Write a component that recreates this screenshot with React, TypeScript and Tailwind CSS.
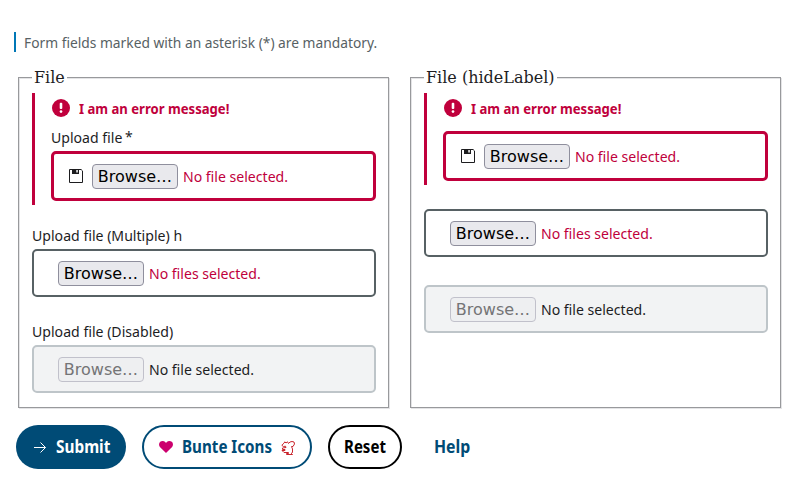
import type { ReactNode } from 'react';

type TextProps = { className?: string; children: ReactNode };

/** Narrow-set text: the glyphs are condensed horizontally from their left edge. */
function Text({ className = '', children }: TextProps) {
  return <span className={`block origin-left whitespace-nowrap ${className}`}>{children}</span>;
}

function ErrorMessage() {
  return (
    <div className="flex h-[30px] items-center text-[#c0003c]">
      <svg viewBox="0 0 18 18" className="ml-px size-[18px] shrink-0">
        <circle cx="9" cy="9" r="9" fill="currentColor" />
        <rect x="7.7" y="3.8" width="2.6" height="6.2" rx="0.9" fill="#fff" />
        <circle cx="9" cy="12.6" r="1.35" fill="#fff" />
      </svg>
      <Text className="ml-[9px] w-[150px] scale-x-[0.873] text-[15px] leading-6 font-bold">
        I am an error message!
      </Text>
    </div>
  );
}

function SaveIcon() {
  return (
    <svg viewBox="0 0 14 14" className="mt-[5px] size-[14px] shrink-0" fill="none" stroke="#1d1d1f">
      <path d="M.5.5h11.6l1.4 1.4v11.6H.5z" />
      <path d="M3 0.5h7v4.5H3z" fill="#1d1d1f" stroke="none" />
      <path d="M7.3 1h1.5v2.5H7.3z" fill="#fff" stroke="none" />
    </svg>
  );
}

type FileInputProps = { state: 'error' | 'default' | 'disabled'; multiple?: boolean };

const boxStyles = {
  error: 'h-[50px] border-3 border-[#c0003c] pl-[15px] text-[#c0003c]',
  default: 'h-12 border-2 border-[#576164] pl-6 text-[#c0003c]',
  disabled: 'h-12 border-2 border-[#bec5c9] bg-[#f2f3f4] pl-6 text-[#1d1d1f]',
};

function FileInput({ state, multiple = false }: FileInputProps) {
  const disabled = state === 'disabled';
  return (
    <div className={`flex items-start rounded-[5px] pt-[10px] ${boxStyles[state]}`}>
      {state === 'error' && <SaveIcon />}
      <button
        className={`h-[25px] w-[86px] shrink-0 rounded-[4px] border font-['DejaVu_Sans',sans-serif] text-[16px] leading-[22px] ${
          state === 'error' ? 'ml-[9px]' : ''
        } ${
          disabled
            ? 'border-[#c1c1cb] bg-[#eeeff1] text-[#747476]'
            : 'border-[#8f8f9d] bg-[#e9e9ed] text-black'
        }`}
      >
        Browse…
      </button>
      <Text className="ml-[5px] w-0 scale-x-[0.938] text-[15px] leading-6">
        {multiple ? 'No files selected.' : 'No file selected.'}
      </Text>
    </div>
  );
}

function Fieldset({ legend, children }: { legend: string; children: ReactNode }) {
  return (
    <section className="h-[331px] w-[371px] border border-[#98999c] shadow-[1px_1px_0_#e4e4e6,inset_1px_1px_0_#e4e4e6]">
      <h2 className="-mt-[10px] ml-[13px] w-fit bg-white px-[2px] font-['DejaVu_Serif',serif] text-[16px] leading-5 whitespace-nowrap">
        {legend}
      </h2>
      <div className="ml-[13px] w-[344px] pt-[5px]">{children}</div>
    </section>
  );
}

function Label({ children }: { children: ReactNode }) {
  return <Text className="h-6 w-0 scale-x-[0.94] text-[15px] leading-[22px]">{children}</Text>;
}

export default function App() {
  return (
    <main className="h-[485px] w-[800px] overflow-hidden bg-white font-['Noto_Sans',sans-serif] text-[#1d1d1f]">
      <div className="pt-8 pl-[14px]">
        <div className="flex h-5 items-center border-l-2 border-[#0077b6] pl-2 text-[#576164]">
          <Text className="w-0 scale-x-[0.919] text-[15px] leading-6">
            Form fields marked with an asterisk (*) are mandatory.
          </Text>
        </div>
      </div>

      <div className="mt-[25px] ml-[18px] flex gap-[21px]">
        <Fieldset legend="File">
          <div className="h-28 border-l-3 border-[#c0003c] pl-4">
            <ErrorMessage />
            <div className="mb-px flex h-[27px] items-center">
              <Text className="w-[74px] scale-x-[0.938] text-[15px] leading-6">Upload file</Text>
              <span className="text-[14px] leading-6">*</span>
            </div>
            <FileInput state="error" />
          </div>
          <div className="mt-[19px]">
            <Label>Upload file (Multiple) h</Label>
            <div className="mt-px">
              <FileInput state="default" multiple />
            </div>
          </div>
          <div className="mt-[23px]">
            <Label>Upload file (Disabled)</Label>
            <div className="mt-px">
              <FileInput state="disabled" />
            </div>
          </div>
        </Fieldset>

        <Fieldset legend="File (hideLabel)">
          <div className="h-[92px] border-l-3 border-[#c0003c] pl-4">
            <ErrorMessage />
            <div className="pt-2">
              <FileInput state="error" />
            </div>
          </div>
          <div className="mt-6">
            <FileInput state="default" multiple />
          </div>
          <div className="mt-7">
            <FileInput state="disabled" />
          </div>
        </Fieldset>
      </div>

      <div className="mt-[17px] ml-4 flex h-11 gap-4 text-[17px] leading-6 font-bold">
        <button className="flex w-[110px] items-center rounded-full bg-[#004b76] pl-[18px] text-white">
          <svg viewBox="0 0 12 11" className="mt-px h-[11px] w-3 shrink-0" fill="none" stroke="currentColor">
            <path d="M0 5.5h11.5M6.5.5l5 5-5 5" />
          </svg>
          <Text className="ml-[10px] w-0 scale-x-[0.903]">Submit</Text>
        </button>
        <button className="flex w-[170px] items-center rounded-full border-2 border-[#004b76] pl-[15px] text-[#004b76]">
          <svg viewBox="0 0 14 12" className="h-3 w-[14px] shrink-0" fill="#cc006e">
            <path d="M7 12 .9 5.9C-.4 4.4-.2 2 1.2.8 2.8-.4 5-.2 6.2 1.1L7 2l.8-.9C9-.2 11.2-.4 12.8.8c1.4 1.2 1.6 3.6.3 5.1z" />
          </svg>
          <Text className="ml-[9px] w-[99px] scale-x-[0.892]">Bunte Icons</Text>
          <svg
            viewBox="0 0 14 14"
            className="mt-px size-[14px] shrink-0"
            fill="none"
            stroke="#c9252d"
            strokeLinejoin="round"
          >
            <path d="M.8 4.3 3 2.2 3.8.8 5 2 6.500.8 7.500 2.500 9 1l2-.5 2 .5.5 2-1.500 2.500H10.500L11.500 8v3.500L10 12.500l1.500 1H5.500V12.500H7.500V11.500H3L1 9.500H4V8.500H1.500V7L5 6.500 4.500 5.200 2.500 5.500z" />
          </svg>
        </button>
        <button className="flex w-[74px] items-center rounded-full border-2 border-black pl-[14px] text-black">
          <Text className="w-0 scale-x-[0.886]">Reset</Text>
        </button>
        <button className="flex items-center pl-4 text-[#004b76]">
          <Text className="w-0 scale-x-[0.932]">Help</Text>
        </button>
      </div>
    </main>
  );
}
